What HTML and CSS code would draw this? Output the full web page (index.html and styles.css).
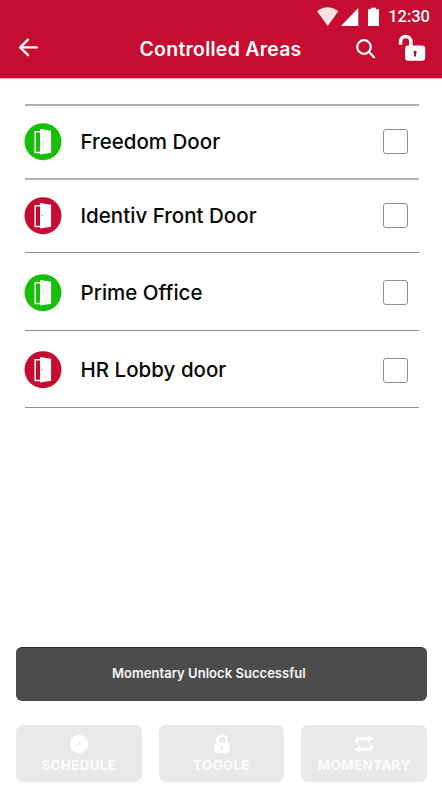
FILE: index.html
```html
<!DOCTYPE html>
<html lang="en">
<head>
<meta charset="utf-8">
<title>Controlled Areas</title>
<link rel="stylesheet" href="styles.css">
</head>
<body>
<svg class="defs" width="0" height="0">
  <symbol id="door" viewBox="0 0 38 38">
    <circle cx="19" cy="18.7" r="18.5" fill="currentColor"/>
    <path d="M16.5 8.7H11.2V29.4H16.5" fill="none" stroke="#fff" stroke-width="1.5"/>
    <path d="M16 6L27.1 7.7V29.8L16 31.6Z" fill="#fff"/>
    <path d="M17.3 18.5h1.4" stroke="currentColor" stroke-width=".9" opacity=".6"/>
  </symbol>
</svg>
<header class="header">
  <div class="status">
    <svg class="signals" width="64" height="20" viewBox="0 0 64 20">
      <path d="M1 4.2Q11.5-3.7 22.3 4.2L11.7 19Z" fill="#f9e3e8"/>
      <path d="M42.3 1V19H25Z" fill="#fff"/>
      <path d="M52 2.2H55V.7h5V2.2h3V19H52Z" fill="#fff"/>
    </svg>
    <span class="time">12:30</span>
  </div>
  <div class="bar">
    <svg class="back" width="22" height="20" viewBox="0 0 22 20" fill="none" stroke="#fff" stroke-width="2.4" stroke-linecap="round" stroke-linejoin="round"><path d="M10 1.7L2.2 9.4L10 17.1M2.4 9.4H18.8"/></svg>
    <h1 class="title">Controlled Areas</h1>
    <svg class="search" width="20" height="20" viewBox="0 0 20 20" fill="none" stroke="#fff" stroke-width="2.2" stroke-linecap="round"><circle cx="8" cy="8" r="6.8"/><path d="M13.2 13.2L18 18.2"/></svg>
    <svg class="unlock" width="28" height="28" viewBox="0 0 28 28"><path d="M2.5 10.8V7.7a5.2 5.2 0 0 1 10.4 0V14" fill="none" stroke="#fff" stroke-width="3.6"/><rect x="7.1" y="11.5" width="20.1" height="15.3" rx="3" fill="#fff"/><path d="M17 16.8a1.7 1.7 0 0 1 1.1 3v2.8h-2v-2.8a1.7 1.7 0 0 1 .9-3Z" fill="#7c2836"/></svg>
  </div>
</header>
<main class="main">
  <ul class="areas">
    <li class="area first open"><svg class="door"><use href="#door"/></svg><span class="name">Freedom Door</span><span class="check"></span></li>
    <li class="area second locked"><svg class="door"><use href="#door"/></svg><span class="name">Identiv Front Door</span><span class="check"></span></li>
    <li class="area third open"><svg class="door"><use href="#door"/></svg><span class="name">Prime Office</span><span class="check"></span></li>
    <li class="area fourth locked"><svg class="door"><use href="#door"/></svg><span class="name">HR Lobby door</span><span class="check"></span></li>
  </ul>
</main>
<div class="toast">Momentary Unlock Successful</div>
<footer class="actions">
  <div class="action"><svg width="20" height="20" viewBox="0 0 20 20"><circle cx="10" cy="10" r="9.2" fill="#fff"/><path d="M10.5 6.5v3.8H7" fill="none" stroke="#ececec" stroke-width="1"/></svg><span>SCHEDULE</span></div>
  <div class="action"><svg width="20" height="20" viewBox="0 0 20 20"><path d="M5.6 10V5.8a4.4 4.4 0 0 1 8.8 0V10" fill="none" stroke="#fff" stroke-width="2.7"/><rect x="2.5" y="8.4" width="15" height="10.8" rx="2" fill="#fff"/><path d="M8.8 12.2h2.4L10.6 15.6H9.4Z" fill="#e0e0e0"/></svg><span>TOGGLE</span></div>
  <div class="action"><svg width="20" height="20" viewBox="0 0 20 20"><path d="M2.4 9V7.8a3.2 3.2 0 0 1 3.2-3.2H15M17.6 11v1.2a3.2 3.2 0 0 1-3.2 3.2H5" fill="none" stroke="#fff" stroke-width="3.1"/><path d="M14.3 .6L19.2 4.6L14.3 8.6ZM5.7 11.4L.8 15.4L5.7 19.4Z" fill="#fff"/></svg><span>MOMENTARY</span></div>
</footer>
</body>
</html>
```
FILE: styles.css
```css
* { box-sizing: border-box; }
body { margin: 0; width: 442px; height: 800px; background: #fff; font-family: Inter, "Liberation Sans", sans-serif; display: flex; flex-direction: column; overflow: hidden; }
.defs { position: absolute; }
.header { height: 79px; flex: none; background: #c60c30; border-bottom: 1px solid #efaaa8; color: #fff; }
.status { height: 28px; padding: 7px 12px 0 316px; display: flex; justify-content: space-between; }
.time { font: 500 16.5px/20px Roboto, sans-serif; }
.bar { height: 40px; display: flex; align-items: center; padding: 0 16px 0 18px; }
.title { margin: 2px 0 0 99.5px; width: 217px; font-size: 19.5px; line-height: 24px; font-weight: 600; letter-spacing: .24px; white-space: nowrap; }
.bar svg { flex: none; }
.search { margin: 1px 0 0 -.5px; }
.unlock { margin-left: 22.5px; }
.areas { list-style: none; margin: 25px 23px 0 25px; padding: 0; border-top: 2px solid #adadad; }
.area { display: flex; align-items: center; padding-right: 11px; border-bottom: 1px solid #8e8e8e; }
.first { height: 74px; padding-bottom: 1px; border-bottom: 2px solid #b2b2b2; }
.second { height: 73px; padding-bottom: 1px; }
.third { height: 78px; padding-top: 2px; }
.fourth { height: 77px; padding-top: 2px; }
.open { color: #18bf08; }
.locked { color: #c60c30; }
.door { width: 38px; height: 38px; margin-left: -1px; flex: none; }
.name { flex: 1; margin-left: 18.5px; color: #080808; font-size: 20.5px; font-weight: 500; line-height: 28px; letter-spacing: .02px; white-space: nowrap; }
.check { width: 25px; height: 25px; flex: none; border: 1.5px solid #8f8f8f; border-radius: 3px; }
.toast { margin: auto 15px 0 16px; height: 54px; flex: none; border-radius: 6px; background: #4c4c4c; border-top: 1px solid #2e2e2e; color: #f7f7f7; font-size: 13px; font-weight: 600; line-height: 50px; letter-spacing: .04px; padding-left: 96px; white-space: nowrap; }
.actions { display: flex; gap: 17px; margin: 24.5px 15px 18px 16px; flex: none; }
.action { flex: 1; height: 57px; border-radius: 7px; background: #e9e9e9; color: #fdfdfd; display: flex; flex-direction: column; align-items: center; padding-top: 9px; font-size: 13.3px; line-height: 17px; font-weight: 700; letter-spacing: .42px; }
.action span { margin-top: 3px; }
```
